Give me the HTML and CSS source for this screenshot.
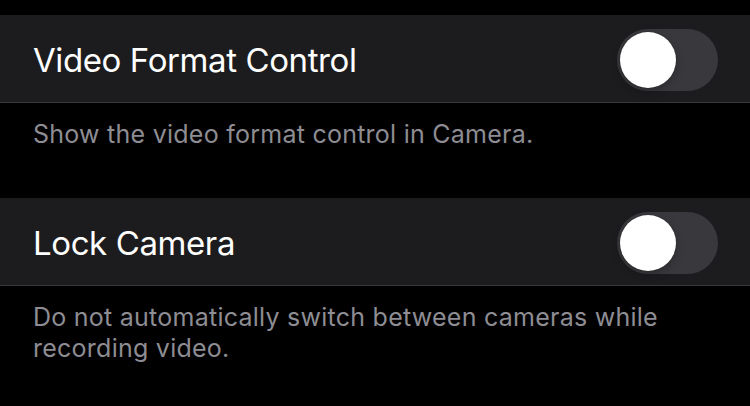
FILE: index.html
```html
<!DOCTYPE html>
<html lang="en">
<head>
<meta charset="utf-8">
<title>Camera Settings</title>
<link rel="stylesheet" href="styles.css">
</head>
<body>
<main class="page">
  <section class="group">
    <div class="cell">
      <span class="cell-title">Video Format Control</span>
      <span class="switch" role="switch" aria-checked="false"><span class="knob"></span></span>
    </div>
    <p class="footer">Show the video format control in Camera.</p>
  </section>
  <section class="group">
    <div class="cell">
      <span class="cell-title">Lock Camera</span>
      <span class="switch" role="switch" aria-checked="false"><span class="knob"></span></span>
    </div>
    <p class="footer">Do not automatically switch between cameras while<br>recording video.</p>
  </section>
</main>
</body>
</html>
```
FILE: styles.css
```css
html, body {
  margin: 0;
  padding: 0;
  background: #000;
}
body {
  width: 750px;
  height: 406px;
  overflow: hidden;
  font-family: Inter, "Noto Sans", "Liberation Sans", sans-serif;
}
.page {
  display: flex;
  flex-direction: column;
  padding-top: 15px;
}
.group + .group {
  margin-top: 48px;
}
.cell {
  height: 85px;
  box-sizing: content-box;
  background: #1c1c1e;
  border-bottom: 1px solid #38383a;
  display: flex;
  align-items: center;
  justify-content: space-between;
  padding: 2px 32px 0 33px;
}
.cell-title {
  color: #fff;
  font-size: 33px;
  line-height: 40px;
  letter-spacing: -0.4px;
}
.switch {
  width: 101px;
  height: 62px;
  border-radius: 31px;
  background: #39393d;
  display: flex;
  align-items: center;
  padding: 0 3px;
  box-sizing: border-box;
}
.knob {
  width: 56px;
  height: 56px;
  border-radius: 50%;
  background: #fff;
  box-shadow: 0 3px 8px rgba(0, 0, 0, 0.25), 0 0 1px rgba(0, 0, 0, 0.3);
}
.footer {
  margin: 0;
  padding: 16px 33px 0;
  color: #8d8d93;
  font-size: 25px;
  line-height: 31px;
  letter-spacing: 0.25px;
}
```
